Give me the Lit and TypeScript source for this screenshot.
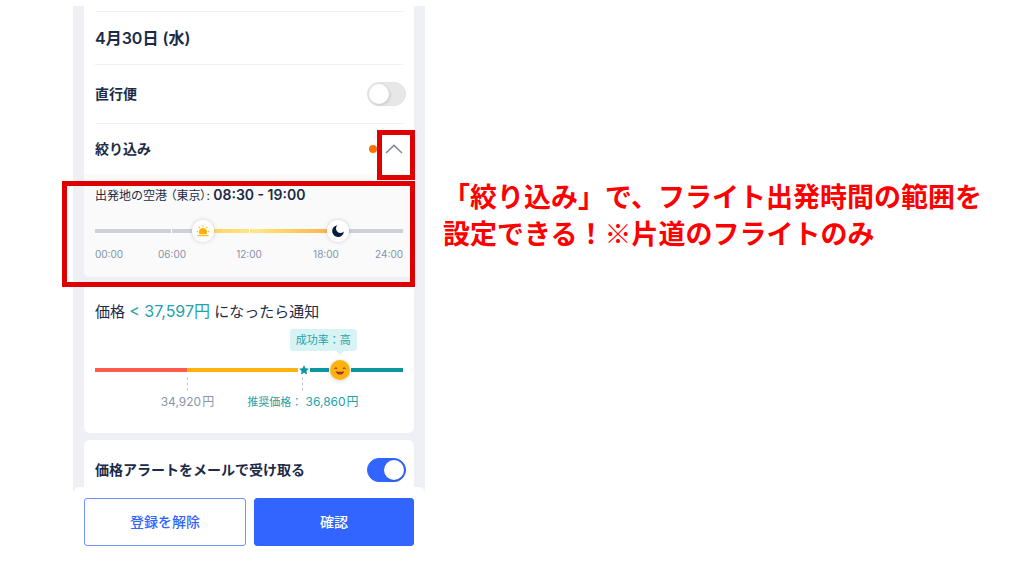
import { LitElement, html, css } from "lit";
import { customElement, property, state } from "lit/decorators.js";

@customElement("toggle-row")
class ToggleRow extends LitElement {
  @property() label = "";
  @property({ type: Boolean }) on = false;

  static styles = css`
    :host { display: block; }
    .row { display: flex; align-items: center; justify-content: space-between; height: 100%; }
    .label { font-size: 14px; line-height: 20px; font-weight: 600; color: #1b2b48; }
    .switch {
      appearance: none; box-sizing: border-box; width: 39px; height: 24px;
      margin: 0 -3px 0 0; padding: 1px; border-radius: 12px; background: #e7e7e7;
      border: 1px solid #e2e2e2; display: flex; cursor: pointer;
    }
    .switch::before {
      content: ""; width: 20px; height: 20px; border-radius: 50%; background: #fff;
      box-shadow: 1px 1px 3px rgba(0, 0, 0, 0.15);
    }
    .switch:checked { background: #3264ff; border-color: #3264ff; justify-content: flex-end; }
  `;

  render() {
    return html`<div class="row">
      <label class="label" for="switch">${this.label}</label>
      <input class="switch" id="switch" type="checkbox" role="switch" .checked=${this.on}
        @change=${(e: Event) => (this.on = (e.target as HTMLInputElement).checked)} />
    </div>`;
  }
}

@customElement("time-range")
class TimeRange extends LitElement {
  @property({ type: Number }) start = 35;
  @property({ type: Number }) end = 79;

  static styles = css`
    :host { display: block; }
    .slider { position: relative; height: 22px; display: flex; align-items: center; }
    .track { flex: 1; height: 4px; display: grid; grid-template-columns: repeat(4, 1fr); gap: 1px; background: #cdd1da; }
    .cell + .cell { box-shadow: -1px 0 #fff; }
    .active {
      position: absolute; height: 4px;
      background: linear-gradient(90deg, #ffd25c, #ffe78a 40%, #ffdf70 48%, #ffac45);
    }
    .middle { position: absolute; left: 50%; width: 1px; height: 4px; background: #fff; }
    .thumb {
      position: absolute; width: 22px; height: 22px; margin-left: -11px; border-radius: 50%;
      background: #fff; box-shadow: 0 0 4px rgba(30, 50, 90, 0.22);
      display: flex; align-items: center; justify-content: center;
    }
    .input { position: absolute; left: 0; width: 100%; height: 22px; margin: 0; opacity: 0; pointer-events: none; }
    .input::-webkit-slider-thumb { pointer-events: auto; }
    .hours {
      display: grid; grid-template-columns: 1fr 2fr 2fr 2fr 1fr; justify-items: center;
      margin-top: 4px; font-size: 10px; line-height: 16px; color: #8592a8;
    }
    .hour:first-child { justify-self: start; }
    .hour:last-child { justify-self: end; }
  `;

  render() {
    return html`
      <div class="slider">
        <div class="track">${[0, 1, 2, 3].map(() => html`<span class="cell"></span>`)}</div>
        <div class="active" style="left:${this.start}%;width:${this.end - this.start}%"></div>
        <div class="middle"></div>
        <span class="thumb" style="left:${this.start}%">
          <svg width="14" height="14" viewBox="0 0 14 14" fill="#ffb000">
            <path d="M3.4 10a4.1 4.1 0 1 1 7.2 0z" />
            <rect x="1.3" y="10.8" width="11.4" height="1.4" rx=".7" opacity=".85" />
            <g opacity=".8">
              <circle cx="7" cy="2" r=".8" /><circle cx="3.2" cy="3.6" r=".8" /><circle cx="10.8" cy="3.6" r=".8" />
              <circle cx="1.5" cy="7.6" r=".8" /><circle cx="12.5" cy="7.6" r=".8" />
            </g>
          </svg>
        </span>
        <span class="thumb" style="left:${this.end}%">
          <svg width="14" height="14" viewBox="0 0 14 14" fill="#071b3c">
            <path d="M6.3 1.2A5.9 5.9 0 1 0 12.9 7.6 3.6 3.6 0 0 1 6.3 1.2z" />
          </svg>
        </span>
        <input class="input" type="range" aria-label="出発時間の開始" .value=${String(this.start)}
          @input=${(e: Event) => (this.start = Math.min(+(e.target as HTMLInputElement).value, this.end - 8))} />
        <input class="input" type="range" aria-label="出発時間の終了" .value=${String(this.end)}
          @input=${(e: Event) => (this.end = Math.max(+(e.target as HTMLInputElement).value, this.start + 8))} />
      </div>
      <div class="hours">
        ${["00:00", "06:00", "12:00", "18:00", "24:00"].map((h) => html`<span class="hour">${h}</span>`)}
      </div>
    `;
  }
}

@customElement("price-gauge")
class PriceGauge extends LitElement {
  static styles = css`
    :host { display: block; }
    .bar { position: relative; display: flex; align-items: center; height: 24px; }
    .segment { height: 4px; }
    .low { flex: 92; background: #ff5a4b; }
    .mid { flex: 110; background: #ffb20c; }
    .near { flex: 19; background: #0b96a0; }
    .high { flex: 52; background: #0b96a0; }
    .star { width: 12px; display: flex; justify-content: center; }
    .face { width: 22px; display: flex; justify-content: center; border-radius: 50%; filter: drop-shadow(0 1px 2px rgba(20, 40, 80, 0.2)); }
    .tip {
      position: absolute; right: 15%; bottom: 31px; padding: 0 6px; border-radius: 3px;
      background: #d8f3f4; color: #25a2a9; font-size: 11px; line-height: 22px; white-space: nowrap;
    }
    .tip::after {
      content: ""; position: absolute; right: 13px; top: 100%;
      border: 4px solid transparent; border-top-color: #d8f3f4; border-bottom: 0;
    }
    .marks { display: grid; grid-template-columns: 60% 15%; margin-top: -5px; }
    .mark { display: flex; flex-direction: column; align-items: center; gap: 1px; font-size: 12px; line-height: 20px; color: #8b96aa; white-space: nowrap; }
    .mark::before { content: ""; height: 14px; border-left: 1px dashed #c5cad5; }
    .best { color: #25a2a9; }
    .prefix { font-size: 11px; }
    .yen { margin-left: 1px; }
    .input { position: absolute; inset: 0; width: 100%; margin: 0; opacity: 0; }
  `;

  render() {
    return html`
      <div class="bar">
        <span class="segment low"></span>
        <span class="segment mid"></span>
        <span class="star">
          <svg width="10" height="10" viewBox="0 0 10 10" fill="#0b96a0" stroke="#0b96a0" stroke-linejoin="round" stroke-width=".6">
            <path d="M5 .8l1.3 2.7 3 .4-2.2 2.1.5 3L5 7.6 2.4 9l.5-3L.7 3.9l3-.4z" />
          </svg>
        </span>
        <span class="segment near"></span>
        <span class="face">
          <svg width="20" height="20" viewBox="0 0 20 20">
            <circle cx="10" cy="10" r="10" fill="#ffb20c" />
            <g fill="none" stroke="#a8582a" stroke-width="1.2" stroke-linecap="round">
              <path d="M4.8 8.5q1-1 2 0M13.2 8.5q1-1 2 0" />
            </g>
            <path d="M6 11.2q4 1 8 0-.4 3.4-4 3.4t-4-3.4z" fill="#8d3040" />
            <path d="M8 13.9q2-1.2 4 0-2 1.2-4 0z" fill="#d8523f" />
          </svg>
        </span>
        <span class="segment high"></span>
        <span class="tip">成功率：高</span>
        <input class="input" type="range" aria-label="通知する価格" value="80" />
      </div>
      <div class="marks">
        <div class="mark"><span>34,920<span class="yen">円</span></span></div>
        <div class="mark best"><span><span class="prefix">推奨価格：</span> 36,860<span class="yen">円</span></span></div>
      </div>
    `;
  }
}

@customElement("app-root")
class AppRoot extends LitElement {
  @state() private open = true;

  static styles = css`
    :host {
      display: block; min-height: 100vh; background: #fff; color: #1b2b48;
      font-family: Inter, "Noto Sans CJK JP", sans-serif;
    }
    .page {
      display: grid; grid-template-columns: 352fr 581fr; column-gap: 18px;
      box-sizing: border-box; min-height: 100vh; padding: 6px 0 0 73px;
    }
    .phone { display: flex; flex-direction: column; background: #eef0f5; }
    .cards { display: flex; flex-direction: column; gap: 7px; padding: 0 11px; }
    .card { background: #fff; border-radius: 6px; }
    .first { border-radius: 0 0 6px 6px; padding-top: 5px; }
    .last { border-radius: 6px 6px 0 0; }
    .line { margin: 0 11px; border-top: 1px solid #eff0f3; box-sizing: border-box; display: flex; align-items: center; }
    .date { height: 53px; font-size: 16px; line-height: 24px; font-weight: 600; }
    .direct { height: 59px; display: block; }
    .direct-toggle { height: 58px; }
    .filter { height: 51px; justify-content: space-between; font-size: 14px; font-weight: 600; line-height: 20px; }
    .filter-end { display: flex; align-items: center; gap: 8px; }
    .dot { width: 8px; height: 8px; border-radius: 50%; background: #ff7300; }
    .chevron { position: relative; display: flex; border: 0; padding: 0; background: none; cursor: pointer; }
    .frame { position: absolute; z-index: 2; border: 5px solid #df0000; pointer-events: none; }
    .frame-chevron { inset: -14px -12px -26px -8px; }
    .frame-range { inset: 7px -1px -10px -22px; }
    .range { position: relative; height: 103px; box-sizing: border-box; padding: 11px 11px 0; background: #fafafa; border-radius: 0 0 6px 6px; }
    .range-title { margin: 0 0 14px; font-size: 12px; line-height: 20px; white-space: nowrap; }
    .city { font-feature-settings: "palt"; }
    .range-value { font-size: 14px; font-weight: 600; }
    .price { box-sizing: border-box; height: 149px; padding: 15px 11px 0; }
    .price-title { margin: 0 0 34px; font-size: 15px; line-height: 24px; font-weight: 400; white-space: nowrap; }
    .amount { color: #25a2a9; font-size: 16px; }
    .mail { height: 47px; padding: 7px 11px 0; box-sizing: border-box; }
    .mail-toggle { height: 46px; }
    .footer {
      flex: 1; display: grid; grid-template-columns: 162fr 160fr; gap: 8px; align-items: start;
      padding: 11px 11px 0; background: #fff; border-radius: 6px 6px 0 0;
    }
    .button {
      height: 48px; padding: 0 0 2px; border: 1px solid #6f93ff; border-radius: 3px; background: #fff;
      color: #3264ff; font: inherit; font-size: 14px; font-weight: 500; cursor: pointer;
    }
    .primary { background: #3264ff; border-color: #3264ff; color: #fff; }
    .note {
      margin: 171px 0 0; font-family: "Noto Sans CJK JP", sans-serif; font-size: 27px;
      line-height: 37px; font-weight: 700; color: #ff0000; white-space: nowrap;
    }
  `;

  render() {
    return html`
      <main class="page">
        <section class="phone">
          <div class="cards">
            <div class="card first">
              <h2 class="line date">4月30日 (水)</h2>
              <div class="line direct"><toggle-row class="direct-toggle" label="直行便"></toggle-row></div>
              <h3 class="line filter">
                絞り込み
                <span class="filter-end">
                  <span class="dot"></span>
                  <button class="chevron" aria-label="絞り込みを開閉" @click=${() => (this.open = !this.open)}>
                    <svg width="18" height="10" viewBox="0 0 18 10" fill="none" stroke="#7e899b" stroke-width="1.5">
                      <path d="M1 9l8-7.6L17 9" />
                    </svg>
                    <span class="frame frame-chevron"></span>
                  </button>
                </span>
              </h3>
              ${this.open
                ? html`<div class="range">
                    <p class="range-title">出発地の空港 <span class="city">（東京）</span>: <span class="range-value">08:30 - 19:00</span></p>
                    <time-range></time-range>
                    <span class="frame frame-range"></span>
                  </div>`
                : null}
            </div>
            <div class="card price">
              <h3 class="price-title">価格 <span class="amount">&lt; 37,597円</span> になったら通知</h3>
              <price-gauge></price-gauge>
            </div>
            <div class="card last mail">
              <toggle-row class="mail-toggle" label="価格アラートをメールで受け取る" on></toggle-row>
            </div>
          </div>
          <footer class="footer">
            <button class="button">登録を解除</button>
            <button class="button primary">確認</button>
          </footer>
        </section>
        <p class="note">「絞り込み」で、フライト出発時間の範囲を<br />設定できる！※片道のフライトのみ</p>
      </main>
    `;
  }
}
